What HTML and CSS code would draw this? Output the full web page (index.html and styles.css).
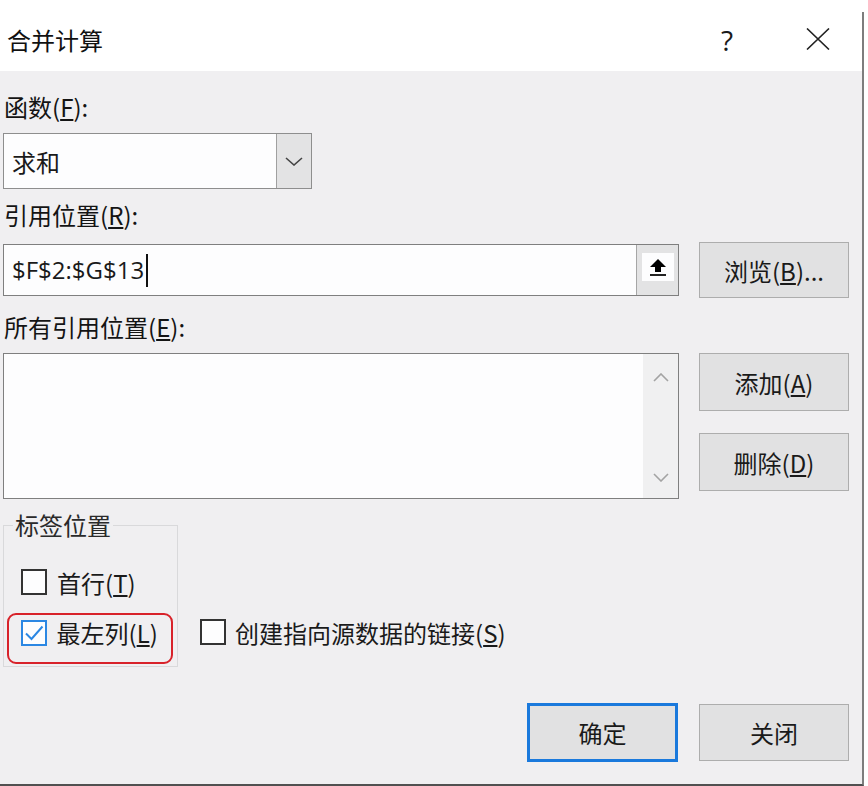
FILE: index.html
```html
<!DOCTYPE html>
<html lang="zh-CN">
<head>
<meta charset="utf-8">
<title>合并计算</title>
<link rel="stylesheet" href="styles.css">
</head>
<body>
<div class="dialog">
  <header class="titlebar">
    <span class="title">合并计算</span>
    <span class="help">?</span>
    <span class="close-x">
      <svg width="24" height="22" viewBox="0 0 24 22"><path d="M1 0.5 L23 21.5 M23 0.5 L1 21.5" stroke="#222" stroke-width="1.6" fill="none"/></svg>
    </span>
  </header>
  <main class="content">
    <div class="label">函数(<u>F</u>):</div>
    <div class="combo">
      <span class="combo-text">求和</span>
      <span class="combo-btn">
        <svg width="18" height="9" viewBox="0 0 18 9"><path d="M1 1 L9 8 L17 1" stroke="#444" stroke-width="1.6" fill="none"/></svg>
      </span>
    </div>
    <div class="label label-ref">引用位置(<u>R</u>):</div>
    <div class="row ref-row">
      <div class="ref-input">
        <span class="ref-text">$F$2:$G$13</span>
        <span class="ref-btn">
          <span class="ref-icon">
            <svg width="18" height="19" viewBox="0 0 18 19"><path d="M9 1 L1 9 L6 9 L6 14 L12 14 L12 9 L17 9 Z" fill="#000"/><rect x="1" y="16" width="16" height="2" fill="#222"/></svg>
          </span>
        </span>
      </div>
      <div class="btn browse">浏览(<u>B</u>)...</div>
    </div>
    <div class="label label-all">所有引用位置(<u>E</u>):</div>
    <div class="row list-row">
      <div class="listbox">
        <div class="list-area"></div>
        <div class="scroll">
          <svg width="16" height="9" viewBox="0 0 16 9"><path d="M1 8 L8 1 L15 8" stroke="#a3a3a3" stroke-width="1.6" fill="none"/></svg>
          <svg width="16" height="9" viewBox="0 0 16 9"><path d="M1 1 L8 8 L15 1" stroke="#a3a3a3" stroke-width="1.6" fill="none"/></svg>
        </div>
      </div>
      <div class="side-btns">
        <div class="btn">添加(<u>A</u>)</div>
        <div class="btn">删除(<u>D</u>)</div>
      </div>
    </div>
    <div class="row options">
      <fieldset class="group">
        <legend>标签位置</legend>
        <div class="check first-row"><span class="box"></span><span>首行(<u>T</u>)</span></div>
        <div class="highlight">
          <div class="check"><span class="box checked"><svg width="22" height="22" viewBox="0 0 22 22"><path d="M3 11.5 L8.5 17 L19.5 4.5" stroke="#2b87e3" stroke-width="2" fill="none"/></svg></span><span>最左列(<u>L</u>)</span></div>
        </div>
      </fieldset>
      <div class="check link-check"><span class="box"></span><span>创建指向源数据的链接(<u>S</u>)</span></div>
    </div>
    <div class="row actions">
      <div class="btn primary">确定</div>
      <div class="btn close-btn">关闭</div>
    </div>
  </main>
</div>
</body>
</html>
```
FILE: styles.css
```css
html, body {
  margin: 0;
  padding: 0;
}
body {
  width: 868px;
  height: 786px;
  background: #ffffff;
  overflow: hidden;
  font-family: "Noto Sans CJK SC", "Noto Sans", sans-serif;
  color: #141414;
}
u {
  text-decoration-thickness: 1.5px;
  text-underline-offset: 2px;
}
.dialog {
  width: 864px;
  height: 786px;
  box-sizing: border-box;
  border-right: 2px solid #7d7d7d;
  border-bottom: 2px solid #505050;
  background: #f0eff1;
  display: flex;
  flex-direction: column;
}
.titlebar {
  height: 71px;
  flex: none;
  box-sizing: border-box;
  padding-top: 8px;
  margin-right: -2px;
  padding-right: 2px;
  background: linear-gradient(#ffffff 12px, #7d7d7d 12px) right top / 2px 100% no-repeat, #ffffff;
  display: flex;
  align-items: center;
}
.title {
  flex: 1;
  margin-left: 7px;
  font-size: 24px;
  line-height: 32px;
  color: #111;
}
.help {
  font-family: "Open Sans", sans-serif;
  font-weight: 400;
  font-size: 28px;
  line-height: 32px;
  color: #1a1a1a;
  margin-right: 73px;
}
.close-x {
  display: flex;
  margin-right: 32px;
  margin-top: -2px;
}
.content {
  width: 846px;
  padding: 20px 0 0 3px;
  display: flex;
  flex-direction: column;
}
.row {
  display: flex;
}
.label {
  font-size: 24px;
  line-height: 32px;
  height: 32px;
  padding-left: 1px;
}
.combo {
  margin-top: 10px;
  width: 309px;
  height: 56px;
  box-sizing: border-box;
  border: 1px solid #8e8e8e;
  background: #fdfdfe;
  display: flex;
  align-items: center;
}
.combo-text {
  flex: 1;
  font-size: 24px;
  padding-left: 8px;
  color: #1a1a1a;
}
.combo-btn {
  width: 34px;
  height: 100%;
  background: #e3e3e4;
  border-left: 1px solid #a0a0a0;
  display: flex;
  align-items: center;
  justify-content: center;
}
.label-ref {
  margin-top: 10px;
}
.ref-row {
  margin-top: 11px;
  align-items: center;
  height: 56px;
}
.ref-input {
  width: 676px;
  height: 52px;
  box-sizing: border-box;
  border: 1px solid #7f7f7f;
  background: #fdfdfe;
  display: flex;
  align-items: center;
}
.ref-text {
  flex: 1;
  font-family: "Open Sans", sans-serif;
  font-size: 24px;
  padding-left: 8px;
  color: #1a1a1a;
}
.ref-text::after {
  content: "";
  display: inline-block;
  width: 2px;
  height: 33px;
  background: #111;
  margin-left: 2px;
  vertical-align: -8px;
}
.ref-btn {
  width: 42px;
  height: 100%;
  box-sizing: border-box;
  background: #e3e3e4;
  border-left: 1px solid #a6a6a6;
  display: flex;
  align-items: center;
  justify-content: center;
}
.ref-icon {
  width: 32px;
  height: 28px;
  background: #fdfdfe;
  display: flex;
  align-items: center;
  justify-content: center;
  margin-top: -6px;
}
.btn {
  width: 150px;
  height: 57px;
  box-sizing: border-box;
  border: 1px solid #adadad;
  background: #e1e1e2;
  font-size: 24px;
  color: #1a1a1a;
  display: flex;
  align-items: center;
  justify-content: center;
}
.browse {
  margin-left: 20px;
  height: 56px;
}
.label-all {
  margin-top: 13px;
}
.list-row {
  margin-top: 10px;
}
.listbox {
  width: 676px;
  height: 146px;
  box-sizing: border-box;
  border: 1px solid #7f7f7f;
  background: #fdfdfe;
  display: flex;
}
.list-area {
  flex: 1;
}
.scroll {
  width: 35px;
  background: #f0f0f1;
  display: flex;
  flex-direction: column;
  align-items: center;
  justify-content: space-between;
  padding: 19px 0 16px;
}
.side-btns {
  margin-left: 20px;
  display: flex;
  flex-direction: column;
  gap: 22px;
}
.side-btns .btn {
  height: 58px;
}
.options {
  margin-top: 10px;
  align-items: flex-end;
}
.group {
  margin: 0;
  padding: 0 0 2px 0;
  width: 175px;
  box-sizing: border-box;
  border: 1px solid #d9d9db;
  min-width: 0;
}
.group legend {
  margin-left: 9px;
  padding: 0 2px;
  font-size: 24px;
  line-height: 32px;
  color: #2a2a2a;
}
.check {
  display: flex;
  align-items: center;
  height: 32px;
  font-size: 24px;
  color: #1a1a1a;
  gap: 10px;
  white-space: nowrap;
}
.box {
  width: 26px;
  height: 26px;
  box-sizing: border-box;
  border: 2px solid #333;
  background: #fdfdfe;
  flex: none;
  display: flex;
  align-items: center;
  justify-content: center;
}
.box.checked {
  border-color: #2b87e3;
}
.first-row {
  margin-top: 25px;
  margin-left: 17px;
}
.highlight {
  margin: 15px 0 0 3px;
  width: 166px;
  box-sizing: border-box;
  border: 2.5px solid #d8222a;
  border-radius: 9px;
  padding: 1.5px 0 13.5px 11.5px;
}
.link-check {
  margin-left: 22px;
  margin-bottom: 19px;
  gap: 9px;
}
.actions {
  margin-top: 36px;
  justify-content: flex-end;
  align-items: center;
  gap: 21px;
}
.primary {
  width: 151px;
  height: 59px;
  border: 3px solid #1a79dc;
}
.close-btn {
  height: 57px;
}
```
